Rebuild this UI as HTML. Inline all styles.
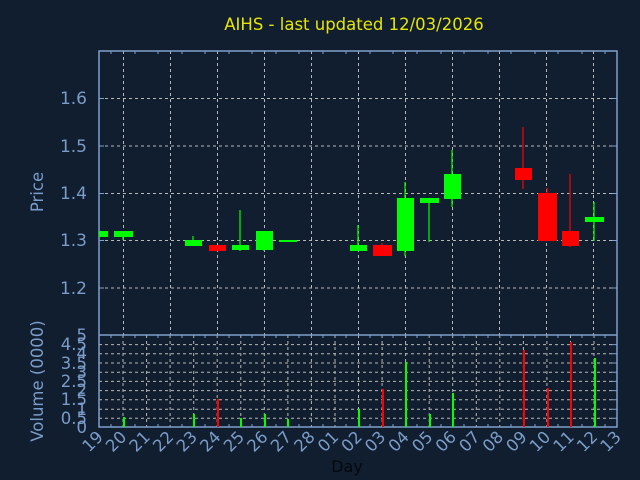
<!DOCTYPE html>
<html><head><style>html,body{margin:0;padding:0;background:#111e2f;}svg{display:block}</style></head>
<body>
<svg width="640" height="480" xmlns="http://www.w3.org/2000/svg" font-family="'DejaVu Sans','Liberation Sans',sans-serif">
<rect width="640" height="480" fill="#111e2f"/>
<text x="354" y="30" fill="#e6e600" font-size="16.5" text-anchor="middle">AIHS - last updated 12/03/2026</text>
<g stroke="#b8b8b8" stroke-width="1" stroke-dasharray="3,3">
<path d="M99 98.5H617M99 146H617M99 193.5H617M99 240.5H617M99 288H617"/>
<path d="M123.5 51V335M170.5 51V335M217.5 51V335M264.5 51V335M311.5 51V335M358.5 51V335M405.5 51V335M452.5 51V335M499.5 51V335M546.5 51V335M593.5 51V335"/>
<path d="M99 418.3H612M99 409.3H612M99 399.8H612M99 390.6H612M99 381.4H612M99 372.2H612M99 363H612M99 353.8H612M99 344.6H612"/>
<path d="M123 335V427M146.6 335V427M170.1 335V427M193.7 335V427M217.2 335V427M240.8 335V427M264.3 335V427M287.9 335V427M311.4 335V427M335 335V427M358.5 335V427M382.1 335V427M405.6 335V427M429.2 335V427M452.7 335V427M476.3 335V427M499.8 335V427M523.4 335V427M546.9 335V427M570.5 335V427M594 335V427"/>
</g>
<g stroke="#7f9fcc" stroke-width="1.5" fill="none">
<rect x="99" y="51" width="518" height="376"/>
<path d="M99 335H617"/>
</g>
<g stroke="#7f9fcc" stroke-width="1">
<path d="M99 98.5h5M99 146h5M99 193.5h5M99 240.5h5M99 288h5M617 98.5h-5M617 146h-5M617 193.5h-5M617 240.5h-5M617 288h-5"/>
<path d="M111 51v3M135 51v3M158 51v3M182 51v3M205 51v3M229 51v3M252 51v3M276 51v3M299 51v3M323 51v3M346 51v3M370 51v3M393 51v3M417 51v3M441 51v3M464 51v3M488 51v3M511 51v3M535 51v3M558 51v3M582 51v3M605 51v3"/>
<path d="M111 335v3M135 335v3M158 335v3M182 335v3M205 335v3M229 335v3M252 335v3M276 335v3M299 335v3M323 335v3M346 335v3M370 335v3M393 335v3M417 335v3M441 335v3M464 335v3M488 335v3M511 335v3M535 335v3M558 335v3M582 335v3M605 335v3"/>
<path d="M111 427v-3M135 427v-3M158 427v-3M182 427v-3M205 427v-3M229 427v-3M252 427v-3M276 427v-3M299 427v-3M323 427v-3M346 427v-3M370 427v-3M393 427v-3M417 427v-3M441 427v-3M464 427v-3M488 427v-3M511 427v-3M535 427v-3M558 427v-3M582 427v-3M605 427v-3"/>
<path d="M617 418.3h-5M617 409.3h-5M617 399.8h-5M617 390.6h-5M617 381.4h-5M617 372.2h-5M617 363h-5M617 353.8h-5M617 344.6h-5"/>
</g>
<g fill="#00ff00" stroke="#00ff00" stroke-width="1.2">
<rect x="99" y="231" width="9" height="6" stroke="none"/>
<path d="M123 237v3"/><rect x="114" y="231" width="19" height="6" stroke="none"/>
<path d="M193 236v5"/><rect x="185" y="240" width="17" height="6" stroke="none"/>
<path d="M240 210v41"/><rect x="232" y="245" width="17" height="5" stroke="none"/>
<path d="M264 249v2"/><rect x="256" y="231" width="17" height="19" stroke="none"/>
<rect x="279" y="240" width="18" height="2" stroke="none"/>
<path d="M358 225v26"/><rect x="350" y="245" width="17" height="6" stroke="none"/>
<path d="M405 182v74"/><rect x="397" y="198" width="17" height="53" stroke="none"/>
<path d="M429 200v42"/><rect x="420" y="198" width="19" height="5" stroke="none"/>
<path d="M452 150v57"/><rect x="444" y="174" width="17" height="25" stroke="none"/>
<path d="M594 202v39"/><rect x="585" y="217" width="19" height="5" stroke="none"/>
</g>
<g fill="#ff0000" stroke="#ff0000" stroke-width="1.2">
<rect x="209" y="245" width="17" height="6" stroke="none"/>
<path d="M382 243v4"/><rect x="373" y="245" width="19" height="11" stroke="none"/>
<path d="M523 127v62"/><rect x="515" y="168" width="17" height="12" stroke="none"/>
<path d="M547 188v6"/><rect x="538" y="193" width="19" height="48" stroke="none"/>
<path d="M570 174v73"/><rect x="562" y="231" width="17" height="15" stroke="none"/>
</g>
<g fill="#00ff00">
<rect x="123" y="417" width="2" height="10"/><rect x="193" y="414" width="2" height="13"/><rect x="240" y="418" width="2" height="9"/><rect x="264" y="414" width="2" height="13"/><rect x="287" y="419" width="2" height="8"/><rect x="358" y="409" width="2" height="18"/><rect x="405" y="362" width="2" height="65"/><rect x="429" y="414" width="2" height="13"/><rect x="452" y="393" width="2" height="34"/><rect x="594" y="358" width="2" height="69"/>
</g>
<g fill="#ff0000">
<rect x="217" y="399" width="2" height="28"/><rect x="382" y="389" width="2" height="38"/><rect x="523" y="350" width="2" height="77"/><rect x="547" y="388" width="2" height="39"/><rect x="570" y="342" width="2" height="85"/>
</g>
<g fill="#7a9cc8" font-size="17" text-anchor="end">
<text x="87" y="104">1.6</text><text x="87" y="152">1.5</text><text x="87" y="199">1.4</text><text x="87" y="246">1.3</text><text x="87" y="294">1.2</text>
</g>
<g fill="#7a9cc8" font-size="16.5" text-anchor="end">
<text x="87" y="433">0</text><text x="87" y="424">0.5</text><text x="87" y="415">1</text><text x="87" y="405">1.5</text><text x="87" y="396">2</text><text x="87" y="387">2.5</text><text x="87" y="378">3</text><text x="87" y="369">3.5</text><text x="87" y="359">4</text><text x="87" y="350">4.5</text><text x="87" y="341">5</text>
</g>
<g fill="#7a9cc8" font-size="16.5">
<text transform="translate(43,192) rotate(-90)" text-anchor="middle">Price</text>
<text transform="translate(43,381) rotate(-90)" text-anchor="middle">Volume (0000)</text>
</g>
<g fill="#7a9cc8" font-size="16.5" text-anchor="end">
<text transform="translate(104,438) rotate(-45)">19</text>
<text transform="translate(127.5,438) rotate(-45)">20</text>
<text transform="translate(151,438) rotate(-45)">21</text>
<text transform="translate(174.6,438) rotate(-45)">22</text>
<text transform="translate(198.2,438) rotate(-45)">23</text>
<text transform="translate(221.7,438) rotate(-45)">24</text>
<text transform="translate(245.3,438) rotate(-45)">25</text>
<text transform="translate(268.8,438) rotate(-45)">26</text>
<text transform="translate(292.4,438) rotate(-45)">27</text>
<text transform="translate(315.9,438) rotate(-45)">28</text>
<text transform="translate(339.5,438) rotate(-45)">01</text>
<text transform="translate(363,438) rotate(-45)">02</text>
<text transform="translate(386.6,438) rotate(-45)">03</text>
<text transform="translate(410.1,438) rotate(-45)">04</text>
<text transform="translate(433.7,438) rotate(-45)">05</text>
<text transform="translate(457.2,438) rotate(-45)">06</text>
<text transform="translate(480.8,438) rotate(-45)">07</text>
<text transform="translate(504.3,438) rotate(-45)">08</text>
<text transform="translate(527.9,438) rotate(-45)">09</text>
<text transform="translate(551.4,438) rotate(-45)">10</text>
<text transform="translate(575,438) rotate(-45)">11</text>
<text transform="translate(598.5,438) rotate(-45)">12</text>
<text transform="translate(622,438) rotate(-45)">13</text>
</g>
<text x="347" y="472" fill="#05080d" font-size="16" text-anchor="middle">Day</text>
</svg>
</body></html>
